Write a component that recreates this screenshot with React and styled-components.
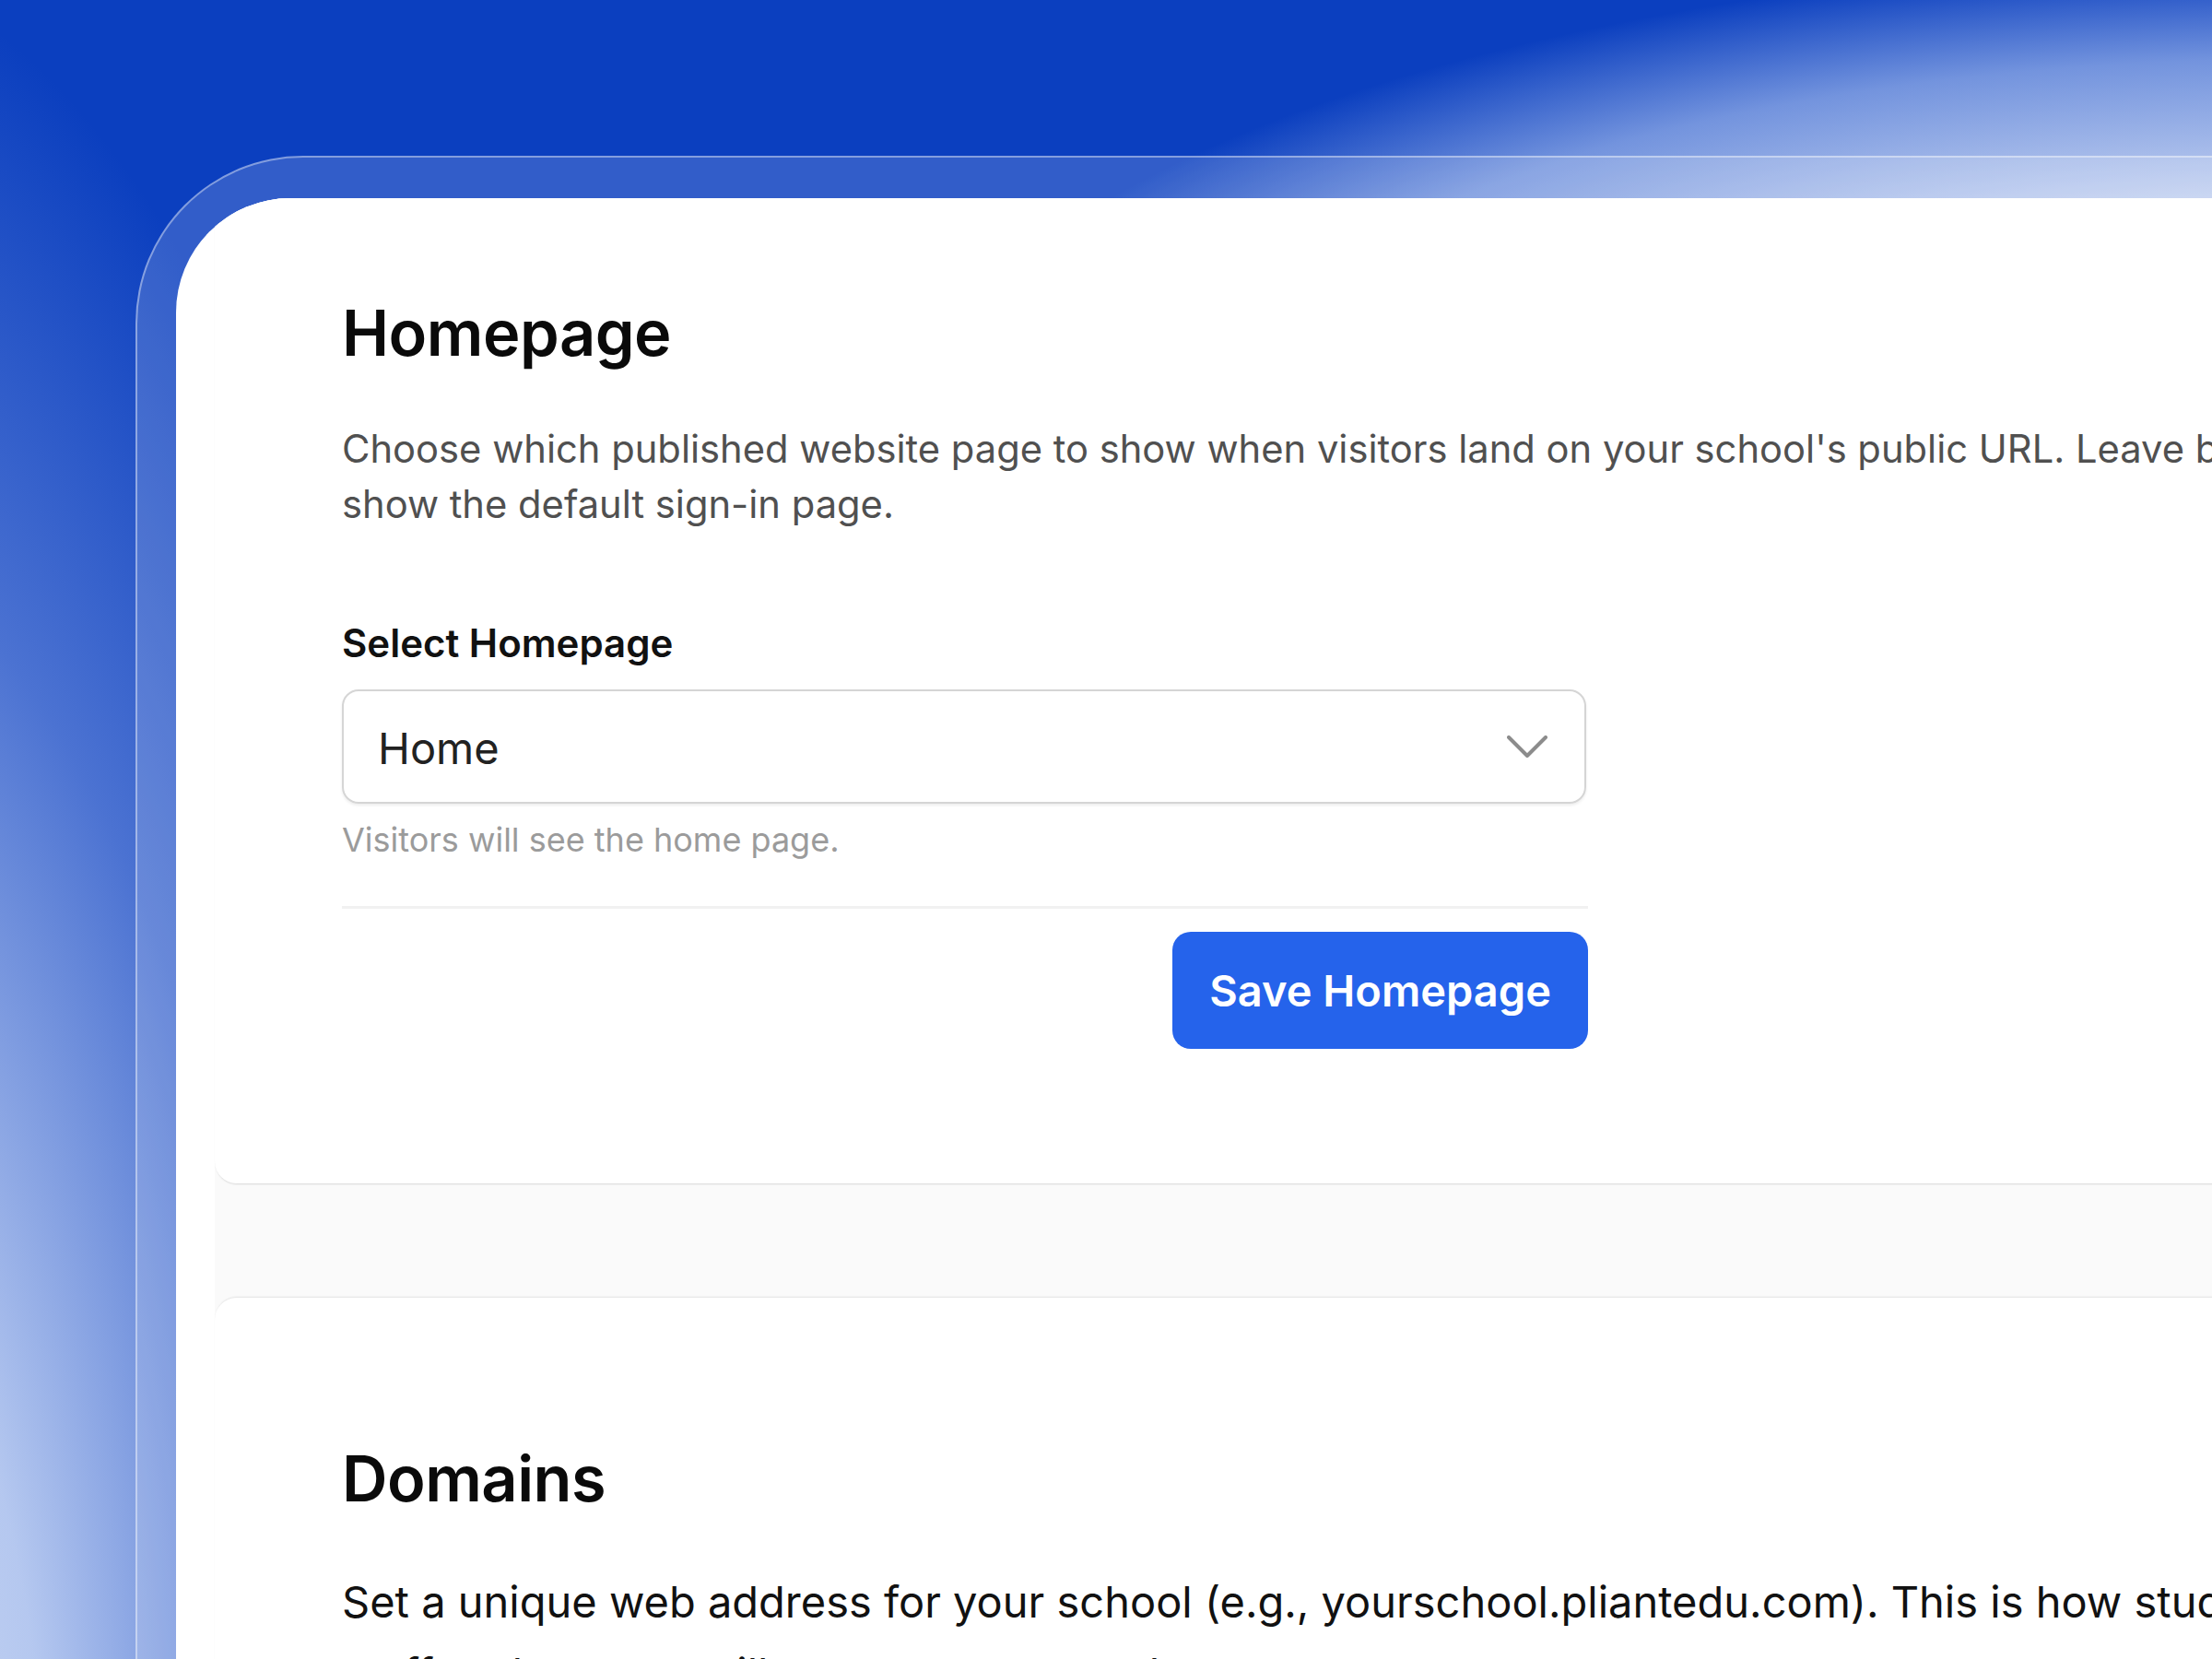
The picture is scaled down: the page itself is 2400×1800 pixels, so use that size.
import React from 'react';
import styled, { createGlobalStyle } from 'styled-components';

const GlobalStyle = createGlobalStyle`
  html, body {
    margin: 0;
    padding: 0;
  }
  body {
    font-family: Inter, "Noto Sans", "Liberation Sans", sans-serif;
    -webkit-font-smoothing: antialiased;
  }
`;

// wallpaper: deep blue with a pale glow from the right and one rising up the left edge
const Desktop = styled.div`
  height: 1800px;
  overflow: hidden;
  box-sizing: border-box;
  padding: 169px 0 0 147px;
  background:
    radial-gradient(ellipse 1520px 545px at 2500px 500px, rgba(200, 213, 242, 1) 0%, rgba(200, 213, 242, 1) 50%, rgba(150, 176, 232, 0.75) 80%, rgba(120, 150, 225, 0) 100%),
    radial-gradient(ellipse 780px 2100px at -220px 2050px, rgba(214, 225, 246, 1) 0%, rgba(190, 207, 242, 0.95) 35%, rgba(110, 142, 220, 0.65) 70%, rgba(80, 115, 210, 0) 100%),
    #0b3fbf;
`;

const WindowFrame = styled.div`
  width: 2600px;
  height: 1800px;
  box-sizing: border-box;
  padding: 44px 0 0 42px;
  border-top-left-radius: 182px;
  border-top: 2px solid rgba(255, 255, 255, 0.4);
  border-left: 2px solid rgba(255, 255, 255, 0.4);
  background: rgba(255, 255, 255, 0.16);
`;

const Panel = styled.div`
  height: 100%;
  background: #ffffff;
  border-top-left-radius: 124px;
  overflow: hidden;
  padding-left: 42px;
`;

const SectionStack = styled.div`
  margin-top: -50px;
  display: flex;
  flex-direction: column;
  gap: 124px;
  background: #fafafa;
`;

const Card = styled.section`
  background: #ffffff;
  border-radius: 24px;
  padding: 156px 0 146px 138px;
  box-shadow:
    0 2px 2px -1px rgba(0, 0, 0, 0.14),
    0 -2px 2px -1px rgba(0, 0, 0, 0.1);
`;

const Title = styled.h2`
  margin: 0;
  font-size: 68.5px;
  line-height: 82.8px;
  font-weight: 600;
  color: #0a0a0a;
  letter-spacing: -0.5px;
`;

const Lead = styled.p`
  margin: ${(p) => (p.$large ? '52px' : '53px')} 0 0;
  font-size: ${(p) => (p.$large ? '47px' : '41.7px')};
  line-height: ${(p) => (p.$large ? '78px' : '60px')};
  color: ${(p) => (p.$large ? '#111111' : '#505050')};
  white-space: nowrap;
`;

const Form = styled.div`
  width: 1352px;
  display: flex;
  flex-direction: column;
`;

const Label = styled.label`
  margin-top: 93px;
  font-size: 42px;
  line-height: 56px;
  font-weight: 600;
  color: #111111;
`;

const SelectBox = styled.div`
  margin-top: 22px;
  width: 1350px;
  height: 124px;
  box-sizing: border-box;
  display: flex;
  align-items: center;
  justify-content: space-between;
  padding: 4px 40px 0 37px;
  border: 2px solid #d5d5d5;
  border-radius: 18px;
  box-shadow: 0 2px 3px rgba(0, 0, 0, 0.07);
  font-size: 47px;
  color: #222222;
`;

const ChevronIcon = styled.svg`
  margin-top: -4px;
`;

const Hint = styled.div`
  margin-top: 15px;
  font-size: 36px;
  line-height: 48px;
  color: #9b9b9b;
`;

const Divider = styled.hr`
  margin: 48px 0 0;
  border: 0;
  height: 3px;
  background: #f1f1f1;
`;

const Actions = styled.div`
  margin-top: 25px;
  display: flex;
  justify-content: flex-end;
`;

const PrimaryButton = styled.button`
  height: 127px;
  padding: 0 40px;
  border: 0;
  border-radius: 20px;
  background: #2563eb;
  color: #ffffff;
  font-family: inherit;
  font-size: 47px;
  font-weight: 600;
  cursor: pointer;
`;

function Chevron() {
  return (
    <ChevronIcon width="44" height="24" viewBox="-2 -2 44 24" fill="none">
      <polyline
        points="0,0 20,20 40,0"
        stroke="#8c8c8c"
        strokeWidth="4"
        strokeLinecap="round"
        strokeLinejoin="round"
      />
    </ChevronIcon>
  );
}

export default function App() {
  return (
    <>
      <GlobalStyle />
      <Desktop>
        <WindowFrame>
          <Panel>
            <SectionStack>
              <Card>
                <Title>Homepage</Title>
                <Lead>
                  Choose which published website page to show when visitors land on your school's public URL. Leave blank to
                  <br />
                  show the default sign-in page.
                </Lead>
                <Form>
                  <Label>Select Homepage</Label>
                  <SelectBox>
                    <span>Home</span>
                    <Chevron />
                  </SelectBox>
                  <Hint>Visitors will see the home page.</Hint>
                  <Divider />
                  <Actions>
                    <PrimaryButton>Save Homepage</PrimaryButton>
                  </Actions>
                </Form>
              </Card>

              <Card>
                <Title>Domains</Title>
                <Lead $large>
                  Set a unique web address for your school (e.g., yourschool.pliantedu.com). This is how students,
                  <br />
                  staff and parents will access your portal.
                </Lead>
              </Card>
            </SectionStack>
          </Panel>
        </WindowFrame>
      </Desktop>
    </>
  );
}
